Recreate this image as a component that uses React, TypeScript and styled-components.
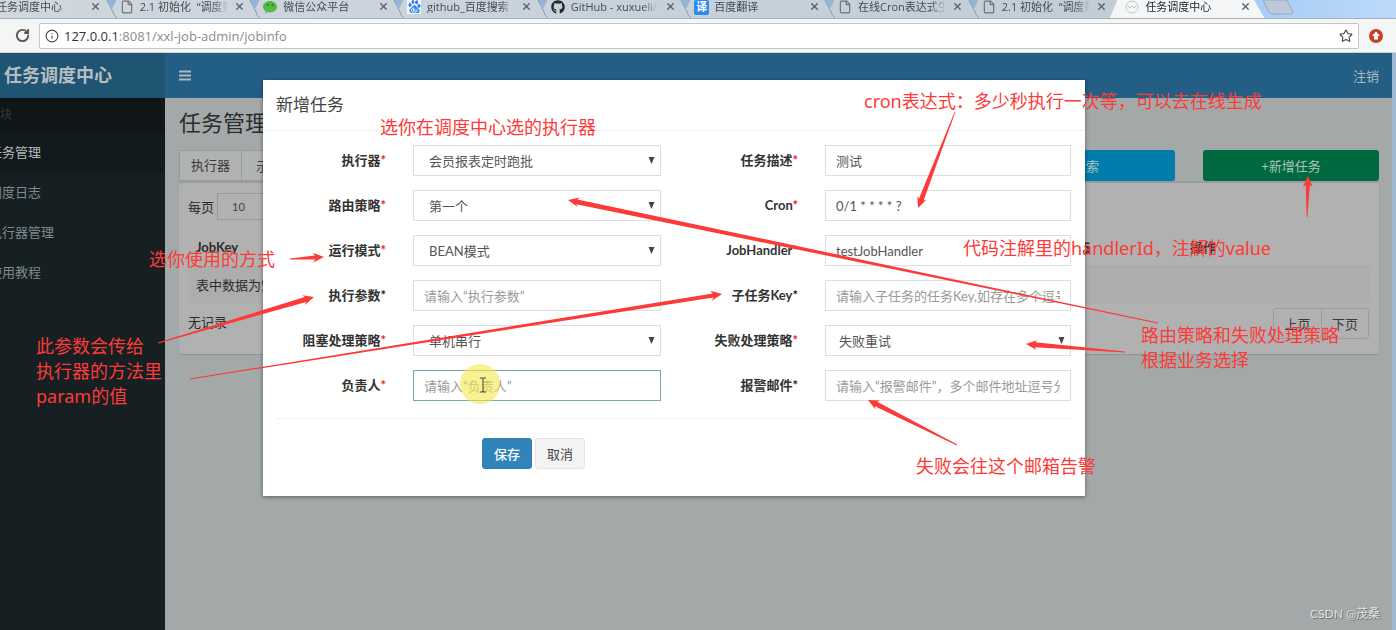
import React from "react";
import styled, { createGlobalStyle, css } from "styled-components";
import { FaGithub } from "react-icons/fa";
import { SiBaidu } from "react-icons/si";
import { X, File, RotateCw, Info, Star } from "lucide-react";

const uiFont = `Lato, "Noto Sans CJK SC", sans-serif`;
const chromeFont = `"Open Sans", "Noto Sans CJK SC", sans-serif`;

const GlobalStyle = createGlobalStyle`
  *, *::before, *::after { box-sizing: border-box; }
  body { margin: 0; overflow: hidden; background: #a3a9a8; }
  button, input, select { font: inherit; margin: 0; }
`;

/* ---------- window ---------- */

const Desktop = styled.div`
  position: relative;
  overflow: hidden;
  min-height: 100vh;
  display: flex;
  font-family: ${uiFont};
  font-size: 13px;
  line-height: 20px;
`;

const BrowserWindow = styled.div`
  position: relative;
  flex: 1;
  min-width: 0;
  margin-left: -32px;
  display: flex;
  flex-direction: column;
`;

const TabStrip = styled.div`
  height: 19px;
  overflow: hidden;
  padding-right: 135px;
  display: flex;
  background: linear-gradient(90deg, #cfd8df 0%, #c3cdd7 80%, #a9cdf5 91%, #bcdafb 100%);
  border-bottom: 1px solid #a7b1ba;
  font-family: ${chromeFont};
  font-size: 11px;
  color: #444b52;
`;

const TabItem = styled.div<{ $active?: boolean }>`
  position: relative;
  flex: 1;
  min-width: 0;
  height: 13px;
  display: flex;
  align-items: center;
  gap: 6px;
  padding: 0 10px 0 8px;
  line-height: 13px;
  ${(p) =>
    p.$active &&
    css`
      color: #22272b;
      &::before {
        content: "";
        position: absolute;
        z-index: 0;
        inset: 0 -4px -6px -8px;
        background: #f4f6f7;
        clip-path: polygon(8px 0, calc(100% - 11px) 0, 100% 100%, 0 100%);
      }
    `}
`;

const Favicon = styled.span<{ $plate?: boolean }>`
  position: relative;
  width: 14px;
  height: 14px;
  flex: none;
  display: grid;
  place-items: center;
  background: ${(p) => (p.$plate ? "#f3f7fc" : "transparent")};
`;

const TranslateMark = styled.span`
  width: 15px;
  height: 15px;
  border-radius: 2px;
  background: #2b8bf2;
  color: #fff;
  font-size: 11px;
  line-height: 14px;
  text-align: center;
  font-weight: 700;
`;

const TabTitle = styled.span`
  position: relative;
  flex: 1;
  min-width: 0;
  overflow: hidden;
  white-space: pre;
  mask-image: linear-gradient(90deg, #000 72px, transparent 88px);
`;

const TabClose = styled.button`
  position: relative;
  width: 12px;
  height: 12px;
  flex: none;
  padding: 0;
  border: 0;
  background: none;
  color: #5b6267;
  display: grid;
  place-items: center;
`;

const TabEdge = styled.svg`
  position: absolute;
  right: -6px;
  top: 0;
`;

const NewTab = styled.button`
  position: absolute;
  top: 0;
  right: 102px;
  width: 32px;
  height: 15px;
  padding: 0;
  border: 0;
  background: none;
  svg {
    display: block;
  }
`;

const AddressBar = styled.div`
  height: 34px;
  display: flex;
  align-items: center;
  padding: 0 12px 0 46px;
  gap: 9px;
  background: #f4f5f5;
  border-bottom: 1px solid #d6d3cd;
`;

const ToolButton = styled.button`
  width: 16px;
  height: 16px;
  padding: 0;
  border: 0;
  background: none;
  color: #555;
  display: grid;
  place-items: center;
`;

const UrlBox = styled.div`
  flex: 1;
  height: 26px;
  padding: 0 5px;
  display: flex;
  align-items: center;
  gap: 5px;
  background: #fff;
  border: 1px solid #c4c6c8;
  border-radius: 2px;
  color: #4c4c4c;
`;

const Url = styled.div`
  flex: 1;
  font-family: ${chromeFont};
  line-height: 24px;
  color: #8c8c8c;
  b {
    font-weight: 400;
    color: #333;
  }
`;

/* ---------- application ---------- */

const Page = styled.div`
  flex: 1;
  display: grid;
  grid-template-columns: 197px 1fr;
  grid-template-rows: 45px 1fr;
  border-right: 4px solid #9fb9d4;
`;

const Logo = styled.div`
  padding-left: 36px;
  background: #1f5573;
  color: #b7bec2;
  font-size: 18px;
  font-weight: 700;
  line-height: 45px;
`;

const Navbar = styled.header`
  display: flex;
  align-items: center;
  justify-content: space-between;
  padding: 0 13px 0 14px;
  background: #235f85;
  color: #a9b8c1;
`;

const NavLink = styled.a`
  color: inherit;
  text-decoration: none;
`;

const Sidebar = styled.nav`
  background: #161f22;
`;

const SidebarTitle = styled.div`
  height: 35px;
  padding-left: 20px;
  background: #101618;
  color: #2f3b3f;
  font-size: 12px;
  line-height: 34px;
`;

const SidebarLink = styled.a<{ $active?: boolean }>`
  display: block;
  height: 40px;
  padding-left: 21px;
  line-height: 38px;
  text-decoration: none;
  color: ${(p) => (p.$active ? "#b4b8b9" : "#7f8a8d")};
  background: ${(p) => (p.$active ? "#131a1d" : "transparent")};
`;

const Content = styled.main`
  padding: 10px 13px 0 14px;
  background: #a3a9a8;
  color: #2a2c2d;
`;

const PageTitle = styled.h1`
  margin: 0 0 12px;
  font-size: 22px;
  line-height: 30px;
  font-weight: 400;
`;

const Toolbar = styled.div`
  display: flex;
  gap: 28px;
  height: 31px;
`;

const FilterGroup = styled.div`
  flex: 1;
  display: flex;
  border: 1px solid #979b9b;
  background: #b1b2b2;
`;

const FilterLabel = styled.label`
  width: 62px;
  text-align: center;
  line-height: 28px;
  color: #3a3a3a;
  border-right: 1px solid #979b9b;
`;

const FilterSelect = styled.select`
  flex: 1;
  appearance: none;
  border: 0;
  padding: 0 14px;
  background: transparent;
  color: #444;
`;

const ActionButton = styled.button<{ $tone: "search" | "create" }>`
  width: ${(p) => (p.$tone === "search" ? 178 : 176)}px;
  padding: 0;
  border: 0;
  border-radius: 3px;
  background: ${(p) => (p.$tone === "search" ? "#027cab" : "#00693f")};
  color: #a9c4ba;
`;

const Box = styled.section`
  padding: 10px 8px 15px 9px;
  border-top: 2px solid #999c9c;
  border-radius: 3px;
  background: #b1b1b1;
  box-shadow: 0 1px 1px #8e9494;
`;

const PageSize = styled.label`
  display: flex;
  align-items: center;
  gap: 3px;
  height: 27px;
  margin-bottom: 9px;
  line-height: 24px;
`;

const PageSizeSelect = styled.select`
  width: 64px;
  height: 27px;
  padding: 0 14px;
  appearance: none;
  border: 1px solid #999;
  border-radius: 0;
  background: transparent;
  color: #444;
  font-size: 11px;
`;

const JobTable = styled.table`
  width: 100%;
  table-layout: fixed;
  border-collapse: collapse;
  th,
  td {
    height: 37px;
    padding: 0 8px;
    text-align: left;
  }
  td {
    background: #adadad;
    border-top: 1px solid #a7a7a7;
  }
`;

const BoxFooter = styled.div`
  display: flex;
  justify-content: space-between;
  margin-top: 5px;
  padding-right: 2px;
  line-height: 28px;
`;

const Pager = styled.div`
  display: flex;
`;

const PagerButton = styled.button`
  width: 48px;
  height: 31px;
  padding: 0;
  border: 1px solid #9c9c9c;
  border-radius: 0 3px 3px 0;
  background: transparent;
  color: #3c3c3c;
  &:first-child {
    border-right: 0;
    border-radius: 3px 0 0 3px;
  }
`;

/* ---------- dialog ---------- */

const DialogLayer = styled.div`
  position: absolute;
  inset: 0;
  padding: 80px 16px 0 0;
  display: flex;
  justify-content: center;
  align-items: flex-start;
`;

const Dialog = styled.div`
  width: 822px;
  background: #fff;
  box-shadow: 0 1px 4px rgba(0, 0, 0, 0.45);
  color: #333;
`;

const DialogTitle = styled.h2`
  margin: 0;
  height: 51px;
  padding: 0 13px;
  border-bottom: 1px solid #f0f0f0;
  font-size: 17px;
  line-height: 50px;
  font-weight: 400;
  color: #444;
`;

const FormBody = styled.form`
  padding: 14px 14px 27px;
`;

const Fields = styled.div`
  display: grid;
  grid-template-columns: 109px 248px 110px 1fr;
  column-gap: 27px;
  row-gap: 14px;
  padding-bottom: 17px;
  border-bottom: 1px solid #f0f0f0;
`;

const FieldLabel = styled.label`
  text-align: right;
  font-weight: 700;
  line-height: 30px;
  white-space: nowrap;
`;

const Mark = styled.span<{ $required: boolean }>`
  color: ${(p) => (p.$required ? "#f02020" : "#222")};
`;

const control = css`
  width: 100%;
  height: 31px;
  border: 1px solid #dcdfe1;
  border-radius: 0;
  background: #fff;
  color: #555;
  outline: 0;
`;

const TextInput = styled.input<{ $focused?: boolean }>`
  ${control}
  padding: 0 10px;
  border-color: ${(p) => (p.$focused ? "#7ea6ae" : "#dcdfe1")};
  &::placeholder {
    color: #999;
    opacity: 1;
  }
`;

const SelectBox = styled.div`
  position: relative;
  svg {
    position: absolute;
    right: 6px;
    top: 12px;
    pointer-events: none;
  }
`;

const Select = styled.select<{ $indent: number }>`
  ${control}
  appearance: none;
  padding: 0 20px 0 ${(p) => p.$indent}px;
`;

const Buttons = styled.div`
  display: flex;
  gap: 3px;
  padding: 19px 0 0 205px;
`;

const DialogButton = styled.button<{ $primary?: boolean }>`
  width: 50px;
  height: 31px;
  padding: 0;
  border: 1px solid ${(p) => (p.$primary ? "#2f7fb2" : "#e4e4e4")};
  border-radius: 3px;
  background: ${(p) => (p.$primary ? "#3184ba" : "#f4f4f4")};
  color: ${(p) => (p.$primary ? "#fff" : "#444")};
  font-weight: ${(p) => (p.$primary ? 500 : 400)};
`;

/* ---------- notes drawn over the page ---------- */

const Overlay = styled.svg`
  position: absolute;
  left: 0;
  top: 0;
  pointer-events: none;
`;

const Note = styled.p<{ $x: number; $y: number }>`
  position: absolute;
  left: ${(p) => p.$x}px;
  top: ${(p) => p.$y}px;
  margin: 0;
  font-family: "Noto Sans", "Noto Sans CJK SC", sans-serif;
  font-size: 18px;
  line-height: 25px;
  font-weight: 400;
  white-space: pre;
  color: #fc3b38;
`;

const Watermark = styled.div`
  position: absolute;
  right: 16px;
  bottom: 6px;
  font-size: 12px;
  color: #dfe2e2;
  text-shadow: 1px 1px 0 #6d7272;
`;

/* ---------- data ---------- */

const page = <File size={14} color="#6b7176" strokeWidth={2} />;

const tabs: { title: string; icon: React.ReactNode; active?: boolean; plate?: boolean }[] = [
  { title: "任务调度中心", icon: null },
  { title: "2.1 初始化  “调度数据库”", icon: page },
  {
    title: "微信公众平台",
    icon: (
      <svg width="14" height="14" viewBox="0 0 14 14">
        <path d="M7 1c3.900 0 7 2.500 7 5.700s-3.100 5.700-7 5.700q-1.200 0-2.300-.3L2.300 13.400l.5-2.200C1.100 10.200 0 8.600 0 6.700 0 3.500 3.100 1 7 1z" fill="#55b945" />
        <circle cx="4.600" cy="5" r="1" fill="#2c6e28" />
        <circle cx="9.400" cy="5" r="1" fill="#2c6e28" />
      </svg>
    ),
  },
  { title: "github_百度搜索", icon: <SiBaidu size={13} color="#2f7fee" />, plate: true },
  { title: "GitHub - xuxueli/xxl-job", icon: <FaGithub size={14} color="#24292e" /> },
  { title: "百度翻译", icon: <TranslateMark>译</TranslateMark> },
  { title: "在线Cron表达式生成器", icon: page },
  { title: "2.1 初始化  “调度数据库”", icon: page },
  {
    title: "任务调度中心",
    active: true,
    icon: (
      <svg width="14" height="14" viewBox="0 0 14 14" fill="none" stroke="#b9c9c6">
        <circle cx="7" cy="7" r="6" />
        <path d="M3 6l2 2 2-2 2 2 2-2" />
      </svg>
    ),
  },
];

type Field = {
  id: string;
  label: string;
  required: boolean;
  option?: string;
  indent?: number;
  value?: string;
  hint?: string;
  focused?: boolean;
};

const fields: Field[] = [
  { id: "group", label: "执行器", required: true, option: "会员报表定时跑批", indent: 15 },
  { id: "desc", label: "任务描述", required: true, value: "测试" },
  { id: "route", label: "路由策略", required: true, option: "第一个", indent: 15 },
  { id: "cron", label: "Cron", required: true, value: "0/1 * * * * ?" },
  { id: "mode", label: "运行模式", required: true, option: "BEAN模式", indent: 15 },
  { id: "handler", label: "JobHandler", required: true, value: "testJobHandler" },
  { id: "param", label: "执行参数", required: false, hint: "请输入“执行参数”" },
  { id: "child", label: "子任务Key", required: false, hint: "请输入子任务的任务Key,如存在多个逗号分隔" },
  { id: "block", label: "阻塞处理策略", required: true, option: "单机串行", indent: 15 },
  { id: "fail", label: "失败处理策略", required: true, option: "失败重试", indent: 13 },
  { id: "author", label: "负责人", required: true, hint: "请输入“负责人”", focused: true },
  { id: "email", label: "报警邮件", required: false, hint: "请输入“报警邮件”，多个邮件地址逗号分隔" },
];

/* tail x, tail y, tip x, tip y, shaft width at the head */
const arrows: [number, number, number, number, number][] = [
  [955, 112, 918, 208, 5],
  [1307, 217, 1308, 176, 4],
  [290, 259, 324, 257, 4],
  [158, 343, 314, 297, 5],
  [190, 379, 722, 294, 4],
  [1158, 323, 568, 200, 5],
  [1125, 352, 1026, 344, 5],
  [957, 445, 868, 400, 5],
];

function arrowPoints([x1, y1, x2, y2, w]: [number, number, number, number, number]) {
  const len = Math.hypot(x2 - x1, y2 - y1);
  const ux = (x2 - x1) / len;
  const uy = (y2 - y1) / len;
  const at = (back: number, side: number) =>
    `${(x2 - ux * back - uy * side).toFixed(1)},${(y2 - uy * back + ux * side).toFixed(1)}`;
  return [
    at(len, 0.4),
    at(9, w / 2),
    at(11, 5),
    at(0, 0),
    at(11, -5),
    at(9, -w / 2),
    at(len, -0.4),
  ].join(" ");
}

const notes: { x: number; y: number; text: string }[] = [
  { x: 380, y: 115, text: "选你在调度中心选的执行器" },
  { x: 864, y: 89, text: "cron表达式：多少秒执行一次等，可以去在线生成" },
  { x: 149, y: 247, text: "选你使用的方式" },
  { x: 36, y: 334, text: "此参数会传给\n执行器的方法里\nparam的值" },
  { x: 963, y: 236, text: "代码注解里的handlerId，注解的value" },
  { x: 1141, y: 323, text: "路由策略和失败处理策略\n根据业务选择" },
  { x: 916, y: 454, text: "失败会往这个邮箱告警" },
];

function FormField({ field }: { field: Field }) {
  return (
    <>
      <FieldLabel htmlFor={field.id}>
        {field.label}
        <Mark $required={field.required}>*</Mark>
      </FieldLabel>
      {field.option ? (
        <SelectBox>
          <Select id={field.id} $indent={field.indent ?? 15}>
            <option>{field.option}</option>
          </Select>
          <svg width="7" height="7" viewBox="0 0 7 7">
            <path d="M0.500 0h6L3.500 7z" fill="#444" />
          </svg>
        </SelectBox>
      ) : (
        <TextInput
          id={field.id}
          defaultValue={field.value}
          placeholder={field.hint}
          $focused={field.focused}
        />
      )}
    </>
  );
}

export default function App() {
  return (
    <Desktop>
      <GlobalStyle />
      <BrowserWindow>
        <TabStrip>
          {tabs.map((tab, i) => (
            <TabItem key={i} $active={tab.active}>
              <Favicon $plate={tab.plate}>{tab.icon}</Favicon>
              <TabTitle>{tab.title}</TabTitle>
              <TabClose aria-label="关闭">
                <X size={11} strokeWidth={3} />
              </TabClose>
              {i < tabs.length - 2 && (
                <TabEdge width="12" height="18" viewBox="0 0 12 18" fill="none">
                  <path d="M1 0h9L6 8z" fill="#8fb6e0" />
                  <path d="M1 0l6 12q1 4 4 6" stroke="#8d99a5" />
                  <path d="M10 0L6 8" stroke="#a5b2be" />
                </TabEdge>
              )}
            </TabItem>
          ))}
        </TabStrip>
        <NewTab aria-label="新标签页">
          <svg width="32" height="15" viewBox="0 0 32 15">
            <path d="M1 0h24l6 12q0 2-2 2H10q-2 0-3-2z" fill="#bccad8" stroke="#91a9c2" />
          </svg>
        </NewTab>
        <AddressBar>
          <ToolButton aria-label="刷新">
            <RotateCw size={15} strokeWidth={3} />
          </ToolButton>
          <UrlBox>
            <Info size={14} strokeWidth={2} />
            <Url>
              <b>127.0.0.1</b>:8081/xxl-job-admin/jobinfo
            </Url>
            <Star size={14} strokeWidth={2} />
          </UrlBox>
          <ToolButton aria-label="扩展程序">
            <svg width="16" height="16" viewBox="0 0 16 16">
              <circle cx="8" cy="8" r="7" fill="#c8401f" />
              <path d="M8 3.500l4 4.500h-2v3.500H6V8H4z" fill="#fff" />
            </svg>
          </ToolButton>
        </AddressBar>

        <Page>
          <Logo>任务调度中心</Logo>
          <Navbar>
            <svg width="12" height="11" viewBox="0 0 12 11">
              <path d="M0 1.500h12M0 5.500h12M0 9.500h12" stroke="currentColor" strokeWidth="2" />
            </svg>
            <NavLink href="#logout">注销</NavLink>
          </Navbar>
          <Sidebar>
            <SidebarTitle>模块</SidebarTitle>
            <SidebarLink href="#jobs" $active>
              任务管理
            </SidebarLink>
            <SidebarLink href="#logs">调度日志</SidebarLink>
            <SidebarLink href="#executors">执行器管理</SidebarLink>
            <SidebarLink href="#help">使用教程</SidebarLink>
          </Sidebar>
          <Content>
            <PageTitle>任务管理</PageTitle>
            <Toolbar>
              <FilterGroup>
                <FilterLabel htmlFor="filter">执行器</FilterLabel>
                <FilterSelect id="filter">
                  <option>示例执行器</option>
                </FilterSelect>
              </FilterGroup>
              <ActionButton $tone="search">搜索</ActionButton>
              <ActionButton $tone="create">+新增任务</ActionButton>
            </Toolbar>
            <Box>
              <PageSize>
                每页
                <PageSizeSelect>
                  <option>10</option>
                </PageSizeSelect>
              </PageSize>
              <JobTable>
                <colgroup>
                  <col />
                  <col width="126" />
                  <col width="189" />
                </colgroup>
                <thead>
                  <tr>
                    <th>JobKey</th>
                    <th>状态</th>
                    <th>操作</th>
                  </tr>
                </thead>
                <tbody>
                  <tr>
                    <td colSpan={3}>表中数据为空</td>
                  </tr>
                </tbody>
              </JobTable>
              <BoxFooter>
                <span>无记录</span>
                <Pager>
                  <PagerButton>上页</PagerButton>
                  <PagerButton>下页</PagerButton>
                </Pager>
              </BoxFooter>
            </Box>
          </Content>
        </Page>

        <DialogLayer>
          <Dialog role="dialog" aria-labelledby="dialog-title">
            <DialogTitle id="dialog-title">新增任务</DialogTitle>
            <FormBody onSubmit={(e) => e.preventDefault()}>
              <Fields>
                {fields.map((f) => (
                  <FormField key={f.id} field={f} />
                ))}
              </Fields>
              <Buttons>
                <DialogButton type="submit" $primary>
                  保存
                </DialogButton>
                <DialogButton type="button">取消</DialogButton>
              </Buttons>
            </FormBody>
          </Dialog>
        </DialogLayer>
      </BrowserWindow>

      <Overlay width="1396" height="630" viewBox="0 0 1396 630">
        <circle cx="480" cy="384" r="20" fill="#f4ea4e" opacity="0.6" />
        <path d="M480 378h2.500l0.500 1 0.500-1h2.500M483 379v12M480 392h2.500l0.500-1 0.500 1h2.500" stroke="#444" fill="none" />
        {arrows.map((a, i) => (
          <polygon key={i} points={arrowPoints(a)} fill="#fc3b38" />
        ))}
      </Overlay>
      {notes.map((n) => (
        <Note key={n.text} $x={n.x} $y={n.y}>
          {n.text}
        </Note>
      ))}
      <Watermark>CSDN @茂桑</Watermark>
    </Desktop>
  );
}
